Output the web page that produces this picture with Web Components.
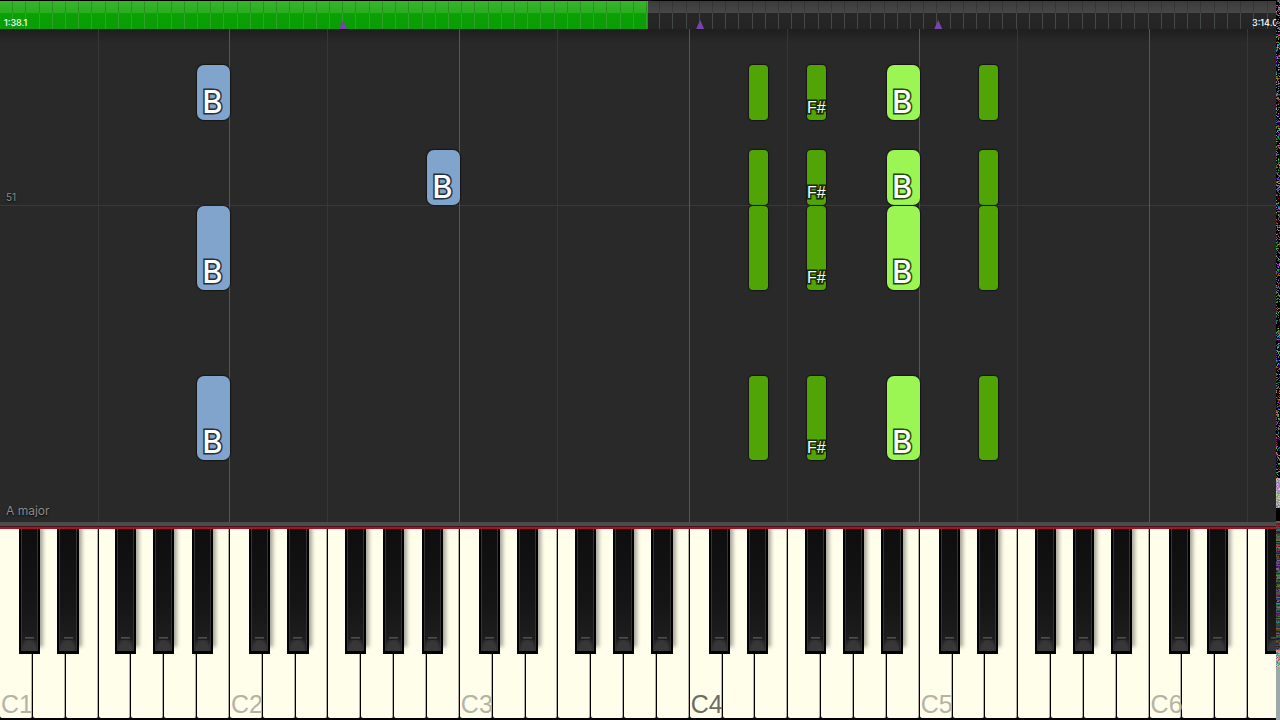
<!DOCTYPE html>
<html lang="en">
<head>
<meta charset="utf-8">
<meta name="viewport" content="width=device-width, initial-scale=1">
<title>Piano roll</title>
<style>
  html, body { margin: 0; height: 100%; background: #000; }
  body { font-family: Inter, "Liberation Sans", sans-serif; }
</style>
</head>
<body>
<piano-app>
  <song-timeline slot="timeline" elapsed="1:38.1" total="3:14.0" value="506" marks="268 547 733"></song-timeline>
  <piano-roll slot="roll" measure="51" key-name="A major">
    <roll-octave>
      <piano-note hand="left" pitch="B" row="2"></piano-note>
      <piano-note hand="left" pitch="B" row="6"></piano-note>
      <piano-note hand="left" pitch="B" row="8"></piano-note>
    </roll-octave>
    <roll-octave>
      <piano-note hand="left" pitch="B" row="4"></piano-note>
    </roll-octave>
    <roll-octave></roll-octave>
    <roll-octave>
      <piano-note pitch="D#" row="2"></piano-note>
      <piano-note pitch="F#" row="2"></piano-note>
      <piano-note pitch="B" row="2"></piano-note>
      <piano-note pitch="D#" row="4"></piano-note>
      <piano-note pitch="F#" row="4"></piano-note>
      <piano-note pitch="B" row="4"></piano-note>
      <piano-note pitch="D#" row="6"></piano-note>
      <piano-note pitch="F#" row="6"></piano-note>
      <piano-note pitch="B" row="6"></piano-note>
      <piano-note pitch="D#" row="8"></piano-note>
      <piano-note pitch="F#" row="8"></piano-note>
      <piano-note pitch="B" row="8"></piano-note>
    </roll-octave>
    <roll-octave>
      <piano-note pitch="D#" row="2"></piano-note>
      <piano-note pitch="D#" row="4"></piano-note>
      <piano-note pitch="D#" row="6"></piano-note>
      <piano-note pitch="D#" row="8"></piano-note>
    </roll-octave>
    <roll-octave></roll-octave>
  </piano-roll>
  <piano-keyboard slot="keyboard">
    <key-octave number="1"></key-octave>
    <key-octave number="2"></key-octave>
    <key-octave number="3"></key-octave>
    <key-octave number="4" middle></key-octave>
    <key-octave number="5"></key-octave>
    <key-octave number="6"></key-octave>
  </piano-keyboard>
  <noise-strip slot="edge"></noise-strip>
</piano-app>

<script>
const shadow = (el, html) => {
  const root = el.attachShadow({ mode: "open" });
  root.innerHTML = html;
  return root;
};

class PianoApp extends HTMLElement {
  connectedCallback() {
    shadow(this, `
      <style>
        :host { display: grid; grid-template-columns: minmax(0, 1fr) 4px; height: 100vh; overflow: hidden;
                --octave: 18.02%; --rows: 36fr 55fr 30fr 55fr 1fr 84fr 86fr 84fr 62fr; }
        main { display: flex; flex-direction: column; min-width: 0; overflow: hidden; }
      </style>
      <main><slot name="timeline"></slot><slot name="roll"></slot><slot name="keyboard"></slot></main>
      <slot name="edge"></slot>`);
  }
}

class SongTimeline extends HTMLElement {
  connectedCallback() {
    const marks = this.getAttribute("marks").split(" ")
      .map(m => `<i class="mark" style="left:${m / 10}%"></i>`).join("");
    shadow(this, `
      <style>
        :host { display: grid; flex: none; height: 29px; width: calc(100% + 4px); position: relative;
                background: #000; color: #fff; font-size: 9px; line-height: 10px; font-weight: 500; }
        progress, .ticks, .times { grid-area: 1 / 1; }
        progress { appearance: none; display: block; width: 100%; height: 28px; margin-top: 1px; border: 0; }
        progress::-webkit-progress-bar { background: linear-gradient(#3b3b3b, #484848 12px, #272727 12px, #242424); }
        progress::-webkit-progress-value { background: linear-gradient(#38b42c, #2aad20 12px, #0aa204 12px, #0a9c05); }
        .ticks { display: flex; margin-top: 1px; }
        .ticks i { flex: 1; background: linear-gradient(rgba(0,0,0,.16) 12px, rgba(150,165,150,.28) 12px) right / 1px 100% no-repeat; }
        .times { display: flex; justify-content: space-between; align-items: flex-end; padding: 0 0 1px 4px; z-index: 1; overflow: hidden; }
        .times span:last-child { width: 28px; }
        .mark { position: absolute; bottom: 0; width: 8px; height: 9px; margin-left: -4px;
                background: #7844a8; clip-path: polygon(50% 0, 100% 100%, 0 100%); }
      </style>
      <progress max="1000" value="${this.getAttribute("value")}" aria-label="Song position"></progress>
      <div class="ticks">${"<i></i>".repeat(97)}</div>
      <div class="times"><span>${this.getAttribute("elapsed")}</span><span>${this.getAttribute("total")}</span></div>
      ${marks}`);
  }
}

class PianoRoll extends HTMLElement {
  connectedCallback() {
    shadow(this, `
      <style>
        :host { display: grid; flex: 1; min-height: 0; overflow: hidden; box-sizing: border-box;
                grid-template-columns: repeat(6, var(--octave)); grid-template-rows: var(--rows);
                background: linear-gradient(#1e1e1e, #292929 14px); color: #8c8c8c; }
        ::slotted(roll-octave) { grid-row: 1 / -1; }
        .bar { grid-area: 1 / 1 / 5 / -1; border-bottom: 1px solid #393939; margin-bottom: -1px; }
        .label { grid-column: 1; align-self: end; padding-left: 6px; text-shadow: 0 1px 2px #000; }
        .measure { grid-row: 1 / 5; font-size: 10px; line-height: 12px; padding-bottom: 2px; }
        .name { grid-row: 9; font-size: 12px; line-height: 16px; padding-bottom: 3px; }
      </style>
      <div class="bar"></div>
      <div class="label measure">${this.getAttribute("measure")}</div>
      <div class="label name">${this.getAttribute("key-name")}</div>
      <slot></slot>`);
    // Explicit columns keep the octaves beside one another while the labels share their cells.
    [...this.children].forEach((octave, i) => octave.style.gridColumn = i + 1);
  }
}

class RollOctave extends HTMLElement {
  connectedCallback() {
    shadow(this, `
      <style>
        :host { display: grid; min-width: 0; grid-template-columns: repeat(84, minmax(0, 1fr)); grid-template-rows: var(--rows); }
        .low, .high { grid-row: 1 / -1; }
        .low { grid-column: 1 / 37; border-right: 1px solid #363636; }
        .high { grid-column: 37 / 85; border-right: 1px solid #565656; }
      </style>
      <div class="low"></div><div class="high"></div><slot></slot>`);
  }
}

// An octave has 84 columns: 12 to a white key, 7 to a semitone.
const WHITE = ["C", "D", "E", "F", "G", "A", "B"];
const SEMITONE = { "C#": 1, "D#": 3, "F#": 6, "G#": 8, "A#": 10 };

class PianoNote extends HTMLElement {
  connectedCallback() {
    const pitch = this.getAttribute("pitch");
    const sharp = pitch in SEMITONE;
    const start = sharp ? SEMITONE[pitch] * 7 + 1 : WHITE.indexOf(pitch) * 12 + 1;
    this.style.gridColumn = `${start} / span ${sharp ? 7 : 12}`;
    this.style.gridRow = this.getAttribute("row");
    this.classList.toggle("sharp", sharp);
    shadow(this, `
      <style>
        :host { --edge: #254a10; display: flex; justify-content: center; align-items: flex-end; z-index: 1; min-width: 0;
                box-sizing: border-box; padding-right: 2px;
                border-radius: 7px; background: #9bf553; color: #fff; box-shadow: 0 0 1px 1px rgba(0,0,0,.5);
                font-size: 31px; line-height: 36px; font-weight: 500; }
        :host([hand="left"]) { --edge: #22303f; background: #81a4cc; }
        :host(.sharp) { --edge: #142c06; background: #50a405; border-radius: 4px; margin: 0 -2px 0 2px; padding: 0;
                        font: 400 16px/24px "Liberation Sans", sans-serif; }
        span { -webkit-text-stroke: 3px var(--edge); paint-order: stroke fill; }
      </style>
      ${pitch === "D#" ? "" : `<span>${pitch}</span>`}`);
  }
}

class PianoKeyboard extends HTMLElement {
  connectedCallback() {
    shadow(this, `
      <style>
        :host { display: flex; flex: 0 0 27.5%; flex-direction: column; min-height: 0; background: #000; }
        .felt { flex: none; height: 7px; background: linear-gradient(#4c4c4c 4px, #451218 4px 5px, #a81426 5px); }
        .keys { flex: 1; min-height: 0; display: grid; grid-template-columns: repeat(6, var(--octave));
                overflow: hidden; border-bottom: 2px solid #000; }
      </style>
      <div class="felt"></div>
      <div class="keys"><slot></slot></div>`);
  }
}

class KeyOctave extends HTMLElement {
  connectedCallback() {
    const n = this.getAttribute("number");
    const whites = WHITE.map(k => `<button class="white ${k}" aria-label="${k}${n}">${k === "C" ? `C${n}` : ""}</button>`).join("");
    const blacks = Object.entries(SEMITONE).map(([k, s]) =>
      `<button class="black" aria-label="${k}${n}" style="grid-column:${s + 1}"><i></i></button>`).join("");
    shadow(this, `
      <style>
        :host { display: grid; min-width: 0; --label: #b4b4a5; }
        :host([middle]) { --label: #6c6c62; }
        div { grid-area: 1 / 1; display: grid; min-width: 0; }
        .whites { grid-template-columns: repeat(7, minmax(0, 1fr)); }
        .blacks { grid-template-columns: repeat(12, minmax(0, 1fr)); grid-template-rows: 66.4% 1fr; pointer-events: none; z-index: 1; }
        button { appearance: none; border: 0; margin: 0; padding: 0; font: inherit; border-radius: 0; min-width: 0; }
        .white { display: flex; align-items: flex-end; background: #fffeeb; color: var(--label);
                 border-right: 1px solid #000; border-radius: 0 0 2px 2px; box-shadow: inset -1px 0 0 rgba(0,0,0,.3);
                 font: 25px/28px "Liberation Sans", sans-serif; padding-left: 1px; overflow: visible; white-space: nowrap; }
        .black { display: flex; align-items: flex-end; pointer-events: auto; margin: 0 -2px 0 0; padding: 0 2px 3px;
                 background: #000; box-shadow: 4px -6px 4px -1px rgba(0,0,0,.35); }
        .black i { flex: 1; height: 100%; box-sizing: border-box; border: solid #343434; border-width: 0 1px;
                   background:
                     linear-gradient(#555, #333) 50% calc(100% - 12px) / 9px 2px no-repeat,
                     radial-gradient(ellipse at 50% 100%, #373737 60%, #222 90%) 50% 100% / 100% 11px no-repeat,
                     linear-gradient(#0e0e0e, #151515 60%, #202020); }
      </style>
      <div class="whites">${whites}</div>
      <div class="blacks">${blacks}</div>`);
  }
}

class NoiseStrip extends HTMLElement {
  connectedCallback() {
    const root = shadow(this, `
      <style>
        :host { display: block; min-width: 0; min-height: 0; }
        canvas { display: block; width: 100%; height: 100%; image-rendering: pixelated; }
      </style>
      <canvas width="4" height="720"></canvas>`);
    const ctx = root.querySelector("canvas").getContext("2d");
    let seed = 7;
    const rnd = () => (seed = (seed * 16807) % 2147483647) / 2147483647;
    const rgb = (low, range) => `rgb(${[0, 1, 2].map(() => low + rnd() * range | 0)})`;
    for (let y = 0; y < 720; y++) {
      const stripe = rgb(20, 110);
      for (let x = 0; x < 4; x++) {
        let c = rnd() < .55 ? "#000" : rgb(0, 180);
        if (y >= 478) c = rgb(110, 120);
        if (y >= 508) c = "#000";
        if (y >= 521) c = rnd() < .7 ? stripe : rgb(10, 110);
        if (y >= 650) c = rgb(90, 130);
        if (y >= 667) c = "#9da8a8";
        ctx.fillStyle = c;
        ctx.fillRect(x, y, 1, 1);
      }
    }
  }
}

customElements.define("piano-app", PianoApp);
customElements.define("song-timeline", SongTimeline);
customElements.define("piano-roll", PianoRoll);
customElements.define("roll-octave", RollOctave);
customElements.define("piano-note", PianoNote);
customElements.define("piano-keyboard", PianoKeyboard);
customElements.define("key-octave", KeyOctave);
customElements.define("noise-strip", NoiseStrip);
</script>
</body>
</html>
